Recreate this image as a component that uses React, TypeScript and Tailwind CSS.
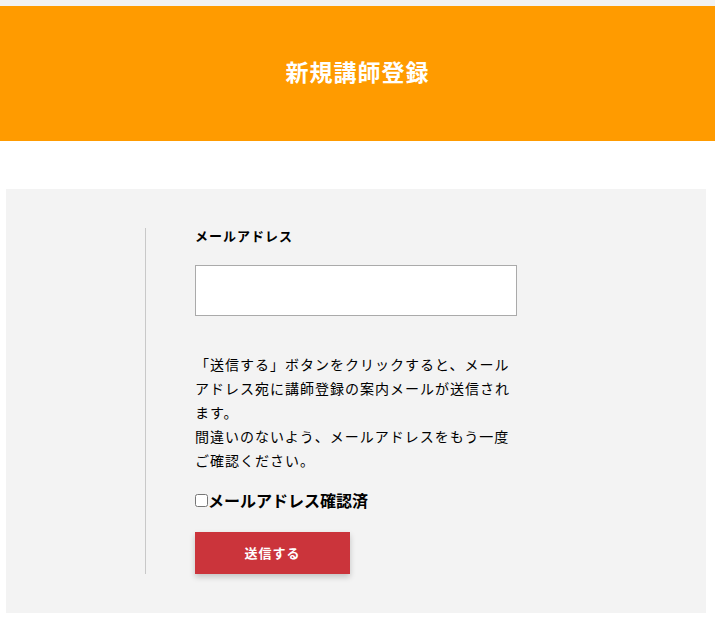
export default function App() {
  return (
    <div
      className="min-h-[620px] bg-white pt-[6px]"
      style={{ fontFamily: '"Noto Sans CJK JP", "Noto Sans", sans-serif' }}
    >
      <div className="fixed top-0 left-0 right-0 h-[6px] bg-[#f2f2f2]" />
      <header className="h-[135px] bg-[#ff9b00] flex items-center justify-center">
        <h1 className="text-[23px] font-bold text-white tracking-[1px] -mt-[4px]">新規講師登録</h1>
      </header>

      <main className="mt-[48px] mx-[6px] mr-[9px] bg-[#f3f3f3] pt-[39px] pb-[39px]">
        <div className="ml-[139px] border-l border-[#c8c8c8] pl-[49px]">
          <label className="block text-[13px] font-bold text-black tracking-[1px] leading-[16px]">
            メールアドレス
          </label>
          <input
            type="email"
            className="mt-[21px] block w-[322px] h-[51px] bg-white border border-[#aaaaaa] outline-none"
          />
          <p className="mt-[36px] w-[320px] text-[14px] leading-[24px] tracking-[1px] text-black">
            「送信する」ボタンをクリックすると、メールアドレス宛に講師登録の案内メールが送信されます。
            <br />
            間違いのないよう、メールアドレスをもう一度ご確認ください。
          </p>
          <label className="mt-[17px] flex items-center text-[16px] font-bold text-black leading-[22px]">
            <input type="checkbox" className="w-[13px] h-[13px] m-0" />
            メールアドレス確認済
          </label>
          <button
            type="button"
            className="mt-[21px] w-[155px] h-[42px] bg-[#cb343b] text-white text-[13px] font-bold tracking-[1px] shadow-[0_3px_6px_rgba(0,0,0,0.2)]"
          >
            送信する
          </button>
        </div>
      </main>
    </div>
  );
}
